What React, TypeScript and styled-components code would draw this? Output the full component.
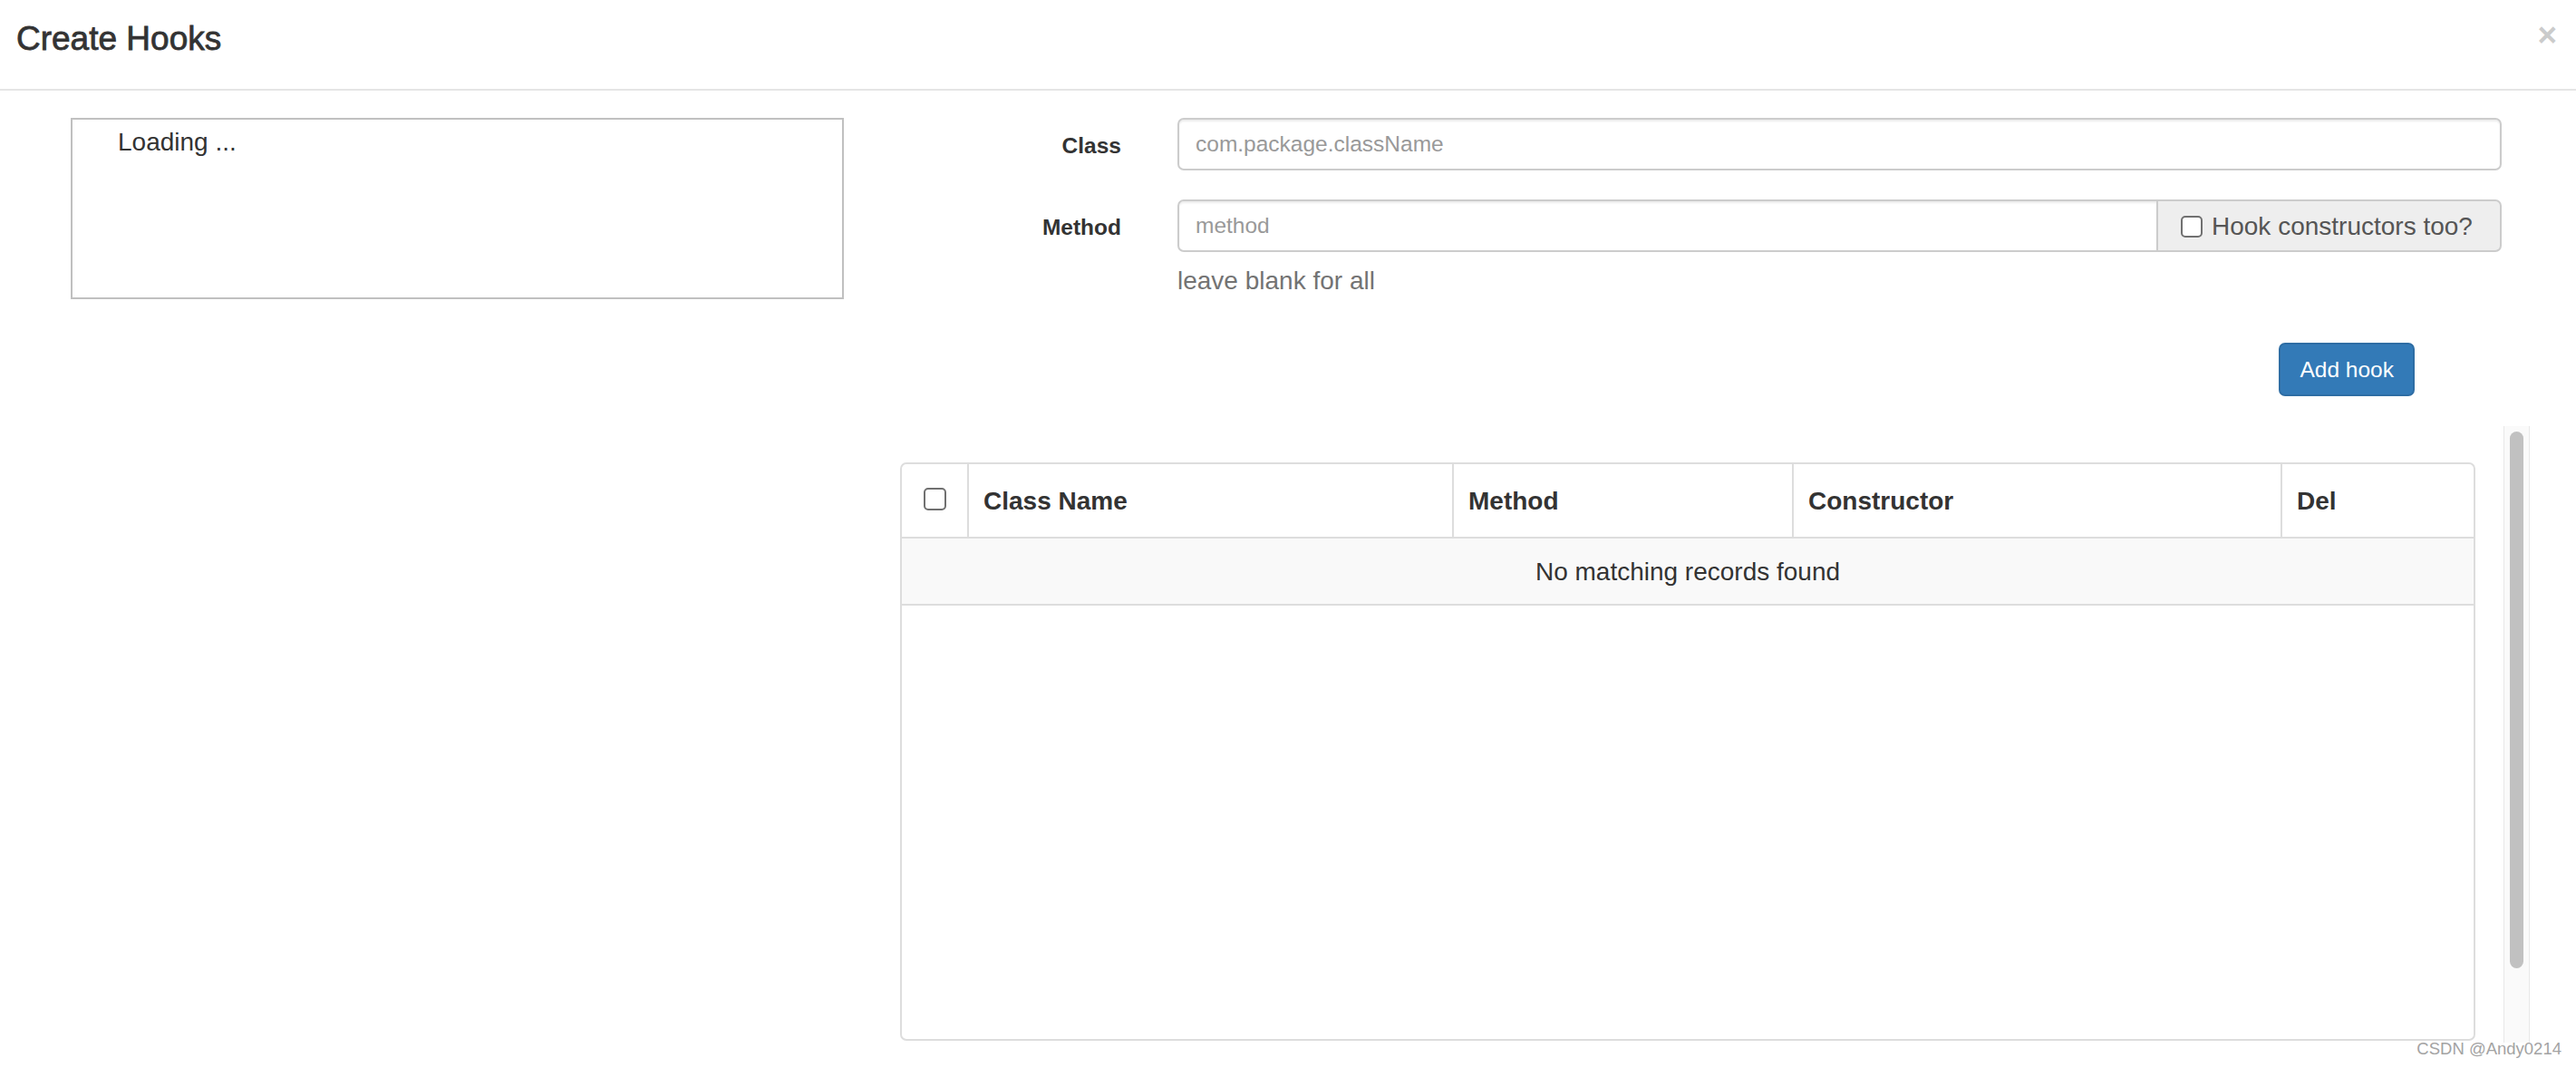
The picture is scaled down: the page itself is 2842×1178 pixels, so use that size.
import styled, { createGlobalStyle } from "styled-components";

const GlobalStyle = createGlobalStyle`
  * {
    box-sizing: border-box;
  }
  html, body {
    margin: 0;
    padding: 0;
    background: #fff;
  }
  body {
    font-family: "Liberation Sans", Arial, Helvetica, sans-serif;
    color: #333;
  }
`;

const Modal = styled.div`
  position: relative;
  width: 2842px;
  height: 1178px;
  overflow: hidden;
  background: #fff;
`;

const Header = styled.div`
  display: flex;
  justify-content: space-between;
  align-items: flex-start;
  height: 100px;
  padding: 23px 21px 0 18px;
  border-bottom: 2px solid #e5e5e5;
`;

const Title = styled.h4`
  margin: 0;
  font-size: 37px;
  line-height: 40px;
  font-weight: 400;
  -webkit-text-stroke: 0.8px #333;
  color: #333;
`;

const Close = styled.button`
  margin-top: -4px;
  padding: 0;
  border: 0;
  background: transparent;
  font-family: "Liberation Sans", Arial, sans-serif;
  font-size: 37px;
  font-weight: 700;
  line-height: 40px;
  color: #000;
  opacity: 0.2;
  cursor: pointer;
`;

const Body = styled.div`
  display: grid;
  grid-template-columns: 853px 1798px;
  column-gap: 62px;
  padding: 30px 0 0 78px;
`;

// 왼쪽 클래스 트리 영역
const TreeBox = styled.div`
  height: 200px;
  border: 2px solid #c0c0c0;
  padding: 5px 0 0 50px;
  font-size: 28px;
  line-height: 40px;
  color: #333;
`;

const RightCol = styled.div`
  display: flex;
  flex-direction: column;
`;

const Form = styled.div`
  display: grid;
  grid-template-columns: 244px 1461px;
  column-gap: 62px;
  row-gap: 32px;
  align-items: center;
`;

const Label = styled.label`
  text-align: right;
  font-size: 24.5px;
  font-weight: 700;
  color: #333;
  padding-top: 3px;
`;

const Input = styled.input<{ $grouped?: boolean }>`
  flex: 1;
  width: 100%;
  height: 58px;
  padding: 0 18px;
  border: 2px solid #ccc;
  border-radius: ${(p) => (p.$grouped ? "7px 0 0 7px" : "7px")};
  box-shadow: inset 0 2px 2px rgba(0, 0, 0, 0.075);
  font-family: "Liberation Sans", Arial, sans-serif;
  font-size: 24.5px;
  color: #555;
  background: #fff;
  &::placeholder {
    color: #999;
  }
  &:focus {
    outline: none;
  }
`;

const InputGroup = styled.div`
  display: flex;
  height: 58px;
`;

const Addon = styled.label`
  display: flex;
  align-items: center;
  gap: 10px;
  width: 379px;
  padding-left: 25px;
  padding-top: 2px;
  border: 2px solid #ccc;
  border-left: 0;
  border-radius: 0 7px 7px 0;
  background: #eee;
  font-size: 28px;
  color: #555;
  white-space: nowrap;
`;

const Check = styled.input.attrs({ type: "checkbox" })<{ $size?: number }>`
  appearance: none;
  margin: 0;
  width: ${(p) => p.$size ?? 24}px;
  height: ${(p) => p.$size ?? 24}px;
  border: 2px solid #707070;
  border-radius: 5px;
  background: #fff;
  flex-shrink: 0;
`;

const HelpBlock = styled.div`
  grid-column: 2;
  margin-top: -20px;
  font-size: 28px;
  line-height: 40px;
  color: #737373;
`;

const ButtonRow = styled.div`
  grid-column: 2;
  display: flex;
  justify-content: flex-end;
  padding-right: 96px;
  margin-top: 16px;
`;

const AddButton = styled.button`
  height: 59px;
  padding: 0 21px;
  border: 2px solid #2e6da4;
  border-radius: 7px;
  background: #337ab7;
  color: #fff;
  font-family: "Liberation Sans", Arial, sans-serif;
  font-size: 24.5px;
  cursor: pointer;
`;

const ScrollArea = styled.div`
  display: flex;
  align-items: flex-start;
  margin-top: 33px;
`;

const TableBox = styled.div`
  width: 1738px;
  height: 638px;
  margin-top: 40px;
  border: 2px solid #ddd;
  border-radius: 7px;
  overflow: hidden;
`;

const Table = styled.table`
  width: 100%;
  table-layout: fixed;
  border-collapse: separate;
  border-spacing: 0;
  font-size: 28px;
`;

const Th = styled.th<{ $center?: boolean }>`
  height: 82px;
  padding: 2px 16px 0;
  text-align: ${(p) => (p.$center ? "center" : "left")};
  vertical-align: middle;
  font-weight: 700;
  color: #333;
  border-bottom: 2px solid #ddd;
  & + & {
    border-left: 2px solid #ddd;
  }
`;

const CheckWrap = styled.div`
  display: flex;
  justify-content: center;
  margin-top: -6px;
`;

const EmptyCell = styled.td`
  height: 74px;
  padding-top: 2px;
  text-align: center;
  vertical-align: middle;
  background: #f9f9f9;
  border-bottom: 2px solid #ddd;
  color: #333;
`;

const ScrollTrack = styled.div`
  width: 29px;
  height: 680px;
  margin-left: 31px;
  padding: 6px 0 0 6px;
  background: #fafafa;
  border-left: 1px solid #e8e8e8;
  border-right: 1px solid #e8e8e8;
`;

const ScrollThumb = styled.div`
  width: 15px;
  height: 592px;
  border-radius: 8px;
  background: #c1c1c1;
`;

const Watermark = styled.div`
  position: absolute;
  right: 16px;
  top: 1148px;
  font-size: 18.5px;
  line-height: 18.5px;
  color: #a3a3a3;
  text-shadow: 0 0 2px #fff;
`;

const columns = [
  { key: "check", width: 72 },
  { key: "className", title: "Class Name", width: 535 },
  { key: "method", title: "Method", width: 375 },
  { key: "ctor", title: "Constructor", width: 539 },
  { key: "del", title: "Del" },
];

export default function App() {
  return (
    <>
      <GlobalStyle />
      <Modal>
        <Header>
          <Title>Create Hooks</Title>
          <Close type="button">×</Close>
        </Header>
        <Body>
          <div>
            <TreeBox>Loading ...</TreeBox>
          </div>
          <RightCol>
            <Form>
              <Label>Class</Label>
              <Input placeholder="com.package.className" />
              <Label>Method</Label>
              <InputGroup>
                <Input $grouped placeholder="method" />
                <Addon>
                  <Check />
                  Hook constructors too?
                </Addon>
              </InputGroup>
              <HelpBlock>leave blank for all</HelpBlock>
              <ButtonRow>
                <AddButton type="button">Add hook</AddButton>
              </ButtonRow>
            </Form>
            <ScrollArea>
              <TableBox>
                <Table>
                  <colgroup>
                    {columns.map((c) => (
                      <col key={c.key} style={c.width ? { width: c.width } : undefined} />
                    ))}
                  </colgroup>
                  <thead>
                    <tr>
                      {columns.map((c) =>
                        c.key === "check" ? (
                          <Th key={c.key} $center>
                            <CheckWrap>
                              <Check $size={25} />
                            </CheckWrap>
                          </Th>
                        ) : (
                          <Th key={c.key}>{c.title}</Th>
                        )
                      )}
                    </tr>
                  </thead>
                  <tbody>
                    <tr>
                      <EmptyCell colSpan={5}>No matching records found</EmptyCell>
                    </tr>
                  </tbody>
                </Table>
              </TableBox>
              <ScrollTrack>
                <ScrollThumb />
              </ScrollTrack>
            </ScrollArea>
          </RightCol>
        </Body>
        <Watermark>CSDN @Andy0214</Watermark>
      </Modal>
    </>
  );
}
